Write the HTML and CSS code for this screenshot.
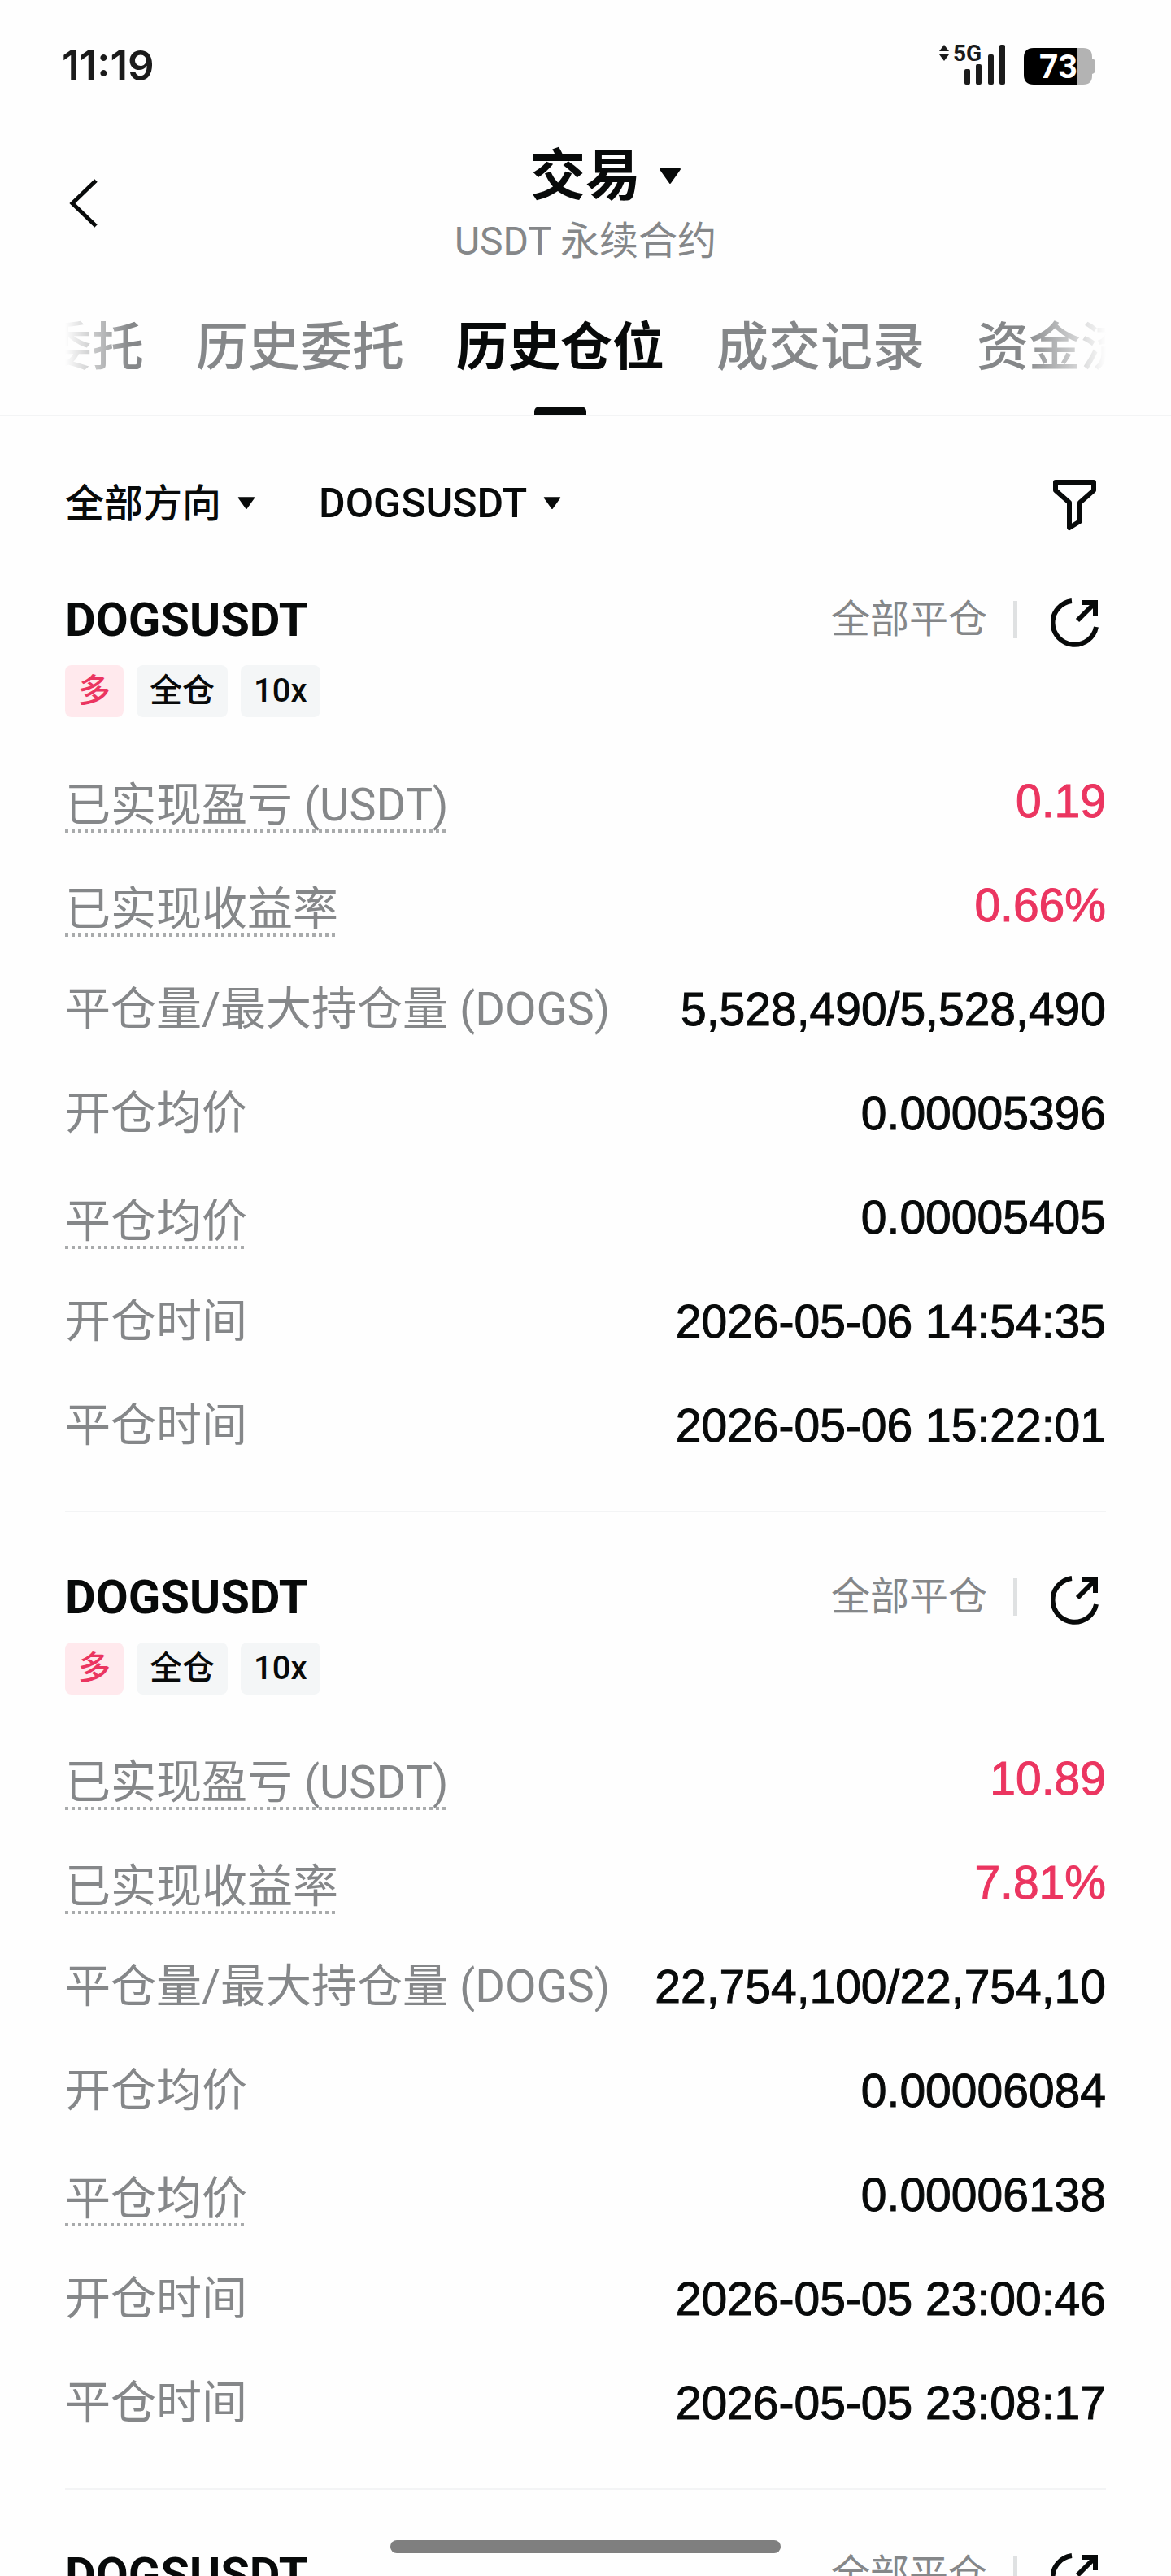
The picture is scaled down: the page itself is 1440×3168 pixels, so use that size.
FILE: index.html
```html
<!DOCTYPE html>
<html lang="zh-CN">
<head>
    <meta charset="UTF-8">
    <meta name="viewport" content="width=device-width, initial-scale=1.0">
    <title>历史仓位</title>
    <link rel="stylesheet" href="styles.css">
</head>
<body>
    <svg class="symbols" aria-hidden="true">
        <symbol id="caret" viewBox="0 0 28 20">
            <path d="M2 1h24L14 18z" fill="currentColor" stroke="currentColor" stroke-width="2" stroke-linejoin="round"/>
        </symbol>
        <symbol id="share" viewBox="0 0 60 72">
            <path d="M26 13A27 27 0 1 0 56 45" fill="none" stroke="currentColor" stroke-width="6"/>
            <path d="M33 37L54 16" fill="none" stroke="currentColor" stroke-width="6"/>
            <path d="M39 15H55V31" fill="none" stroke="currentColor" stroke-width="6"/>
        </symbol>
    </svg>

    <div class="status-bar">
        <span class="clock">11:19</span>
        <svg class="status-icons" viewBox="0 0 194 60" aria-label="5G 73%">
            <g fill="#1b1b1b">
                <path d="M1 13L7 5l6 8zM1 17h12l-6 8z"/>
                <text class="network" x="18" y="25">5G</text>
                <rect x="32" y="35" width="7" height="19" rx="2"/>
                <rect x="46" y="29" width="7" height="25" rx="2"/>
                <rect x="61" y="17" width="7" height="37" rx="2"/>
                <rect x="75" y="5" width="7" height="49" rx="2"/>
            </g>
            <path d="M170 9h8q11 0 11 11v2q4 1 4 5v9q0 4-4 5v2q0 11-11 11h-8z" fill="#b3b3b3"/>
            <path d="M117 9h54v45h-54q-12 0-12-12V21q0-12 12-12z" fill="#000"/>
            <text class="battery" x="124" y="46" fill="#fff">73</text>
        </svg>
    </div>

    <header class="page-header">
        <button class="back" aria-label="返回">
            <svg width="42" height="70" viewBox="0 0 42 70"><path d="M38 4L9 32l29 28" fill="none" stroke="currentColor" stroke-width="5"/></svg>
        </button>
        <div class="heading">
            <button class="title">交易<svg width="28" height="20"><use href="#caret"/></svg></button>
            <div class="subtitle">USDT 永续合约</div>
        </div>
    </header>

    <nav class="tabs">
        <div class="tab-list">
            <button class="tab">委托</button>
            <button class="tab">历史委托</button>
            <button class="tab active">历史仓位</button>
            <button class="tab">成交记录</button>
            <button class="tab">资金流水</button>
        </div>
    </nav>

    <div class="filters">
        <label class="filter">
            <select aria-label="方向"><option>全部方向</option></select>
            <svg width="22" height="16"><use href="#caret"/></svg>
        </label>
        <label class="filter pair">
            <select aria-label="合约"><option>DOGSUSDT</option></select>
            <svg width="22" height="16"><use href="#caret"/></svg>
        </label>
        <button class="filter-button" aria-label="筛选">
            <svg width="60" height="72" viewBox="0 0 60 72"><path d="M6 10h47v10L36 35v23l-13 8V35L6 20z" fill="none" stroke="currentColor" stroke-width="6" stroke-linejoin="round"/></svg>
        </button>
    </div>

    <main class="positions">
        <section class="card">
            <div class="card-head">
                <h2>DOGSUSDT</h2>
                <span class="state">全部平仓</span>
                <button class="share" aria-label="分享"><svg width="60" height="72"><use href="#share"/></svg></button>
            </div>
            <div class="tags">
                <span class="tag long">多</span>
                <span class="tag">全仓</span>
                <span class="tag">10x</span>
            </div>
            <dl class="rows">
                <div class="row"><dt class="hint">已实现盈亏 (USDT)</dt><dd class="profit">0.19</dd></div>
                <div class="row"><dt class="hint">已实现收益率</dt><dd class="profit">0.66%</dd></div>
                <div class="row"><dt>平仓量/最大持仓量 (DOGS)</dt><dd>5,528,490/5,528,490</dd></div>
                <div class="row"><dt>开仓均价</dt><dd>0.00005396</dd></div>
                <div class="row"><dt class="hint">平仓均价</dt><dd>0.00005405</dd></div>
                <div class="row"><dt>开仓时间</dt><dd>2026-05-06 14:54:35</dd></div>
                <div class="row"><dt>平仓时间</dt><dd>2026-05-06 15:22:01</dd></div>
            </dl>
        </section>

        <section class="card">
            <div class="card-head">
                <h2>DOGSUSDT</h2>
                <span class="state">全部平仓</span>
                <button class="share" aria-label="分享"><svg width="60" height="72"><use href="#share"/></svg></button>
            </div>
            <div class="tags">
                <span class="tag long">多</span>
                <span class="tag">全仓</span>
                <span class="tag">10x</span>
            </div>
            <dl class="rows">
                <div class="row"><dt class="hint">已实现盈亏 (USDT)</dt><dd class="profit">10.89</dd></div>
                <div class="row"><dt class="hint">已实现收益率</dt><dd class="profit">7.81%</dd></div>
                <div class="row"><dt>平仓量/最大持仓量 (DOGS)</dt><dd>22,754,100/22,754,10</dd></div>
                <div class="row"><dt>开仓均价</dt><dd>0.00006084</dd></div>
                <div class="row"><dt class="hint">平仓均价</dt><dd>0.00006138</dd></div>
                <div class="row"><dt>开仓时间</dt><dd>2026-05-05 23:00:46</dd></div>
                <div class="row"><dt>平仓时间</dt><dd>2026-05-05 23:08:17</dd></div>
            </dl>
        </section>

        <section class="card">
            <div class="card-head">
                <h2>DOGSUSDT</h2>
                <span class="state">全部平仓</span>
                <button class="share" aria-label="分享"><svg width="60" height="72"><use href="#share"/></svg></button>
            </div>
        </section>
    </main>

    <div class="home-indicator"></div>
</body>
</html>
```

FILE: styles.css
```css
* {
    box-sizing: border-box;
}
body {
    margin: 0;
    height: 100vh;
    overflow: hidden;
    display: flex;
    flex-direction: column;
    background-color: #fefefe;
    color: #080a0a;
    font-family: Roboto, "Noto Sans CJK SC", sans-serif;
    font-size: 48px;
}
button, select {
    padding: 0;
    border: none;
    background: none;
    color: inherit;
    font: inherit;
    cursor: pointer;
}
svg {
    display: block;
    flex-shrink: 0;
}
.symbols {
    position: absolute;
    width: 0;
    height: 0;
}

/* 状态栏 */
.status-bar {
    flex-shrink: 0;
    display: flex;
    justify-content: space-between;
    align-items: center;
    height: 160px;
    padding: 0 92px 0 76px;
}
.clock {
    color: #1b1b1b;
    font-family: Inter, sans-serif;
    font-size: 51px;
    font-weight: 600;
}
.status-icons {
    width: 194px;
    height: 60px;
}
.network {
    font-size: 28px;
    font-weight: 700;
}
.battery {
    font-size: 41px;
    font-weight: 700;
}

/* 标题 */
.page-header {
    flex-shrink: 0;
    display: grid;
    grid-template-columns: 1fr auto 1fr;
    align-items: center;
    padding: 13px 80px 0;
}
.back {
    justify-self: start;
}
.heading {
    text-align: center;
}
.title {
    display: flex;
    align-items: center;
    gap: 22px;
    margin: 0 auto;
    padding-left: 50px;
    font-size: 68px;
    font-weight: 700;
    line-height: 88px;
}
.subtitle {
    color: #858789;
    line-height: 72px;
}

/* 标签页 */
.tabs {
    flex-shrink: 0;
    padding: 50px 80px 0;
    border-bottom: 2px solid #f3f4f5;
}
.tab-list {
    display: flex;
    gap: 64px;
    overflow: hidden;
    -webkit-mask-image: linear-gradient(to right, transparent, #000 80px, #000 calc(100% - 100px), transparent);
    mask-image: linear-gradient(to right, transparent, #000 80px, #000 calc(100% - 100px), transparent);
}
.tab {
    position: relative;
    flex-shrink: 0;
    height: 127px;
    padding-bottom: 37px;
    color: #858789;
    font-size: 64px;
    font-weight: 500;
    line-height: 90px;
}
.tab:first-child {
    margin-left: -31px;
}
.tab.active {
    color: #080a0a;
    font-weight: 700;
}
.tab.active::after {
    content: "";
    position: absolute;
    left: calc(50% - 32px);
    bottom: 0;
    width: 64px;
    height: 10px;
    border-radius: 6px 6px 0 0;
    background-color: #080a0a;
}

/* 筛选 */
.filters {
    flex-shrink: 0;
    display: flex;
    align-items: center;
    gap: 78px;
    padding: 71px 80px 3px;
}
.filter {
    display: flex;
    align-items: center;
    gap: 19px;
}
.filter select {
    appearance: none;
    height: 72px;
    font-weight: 500;
}
.pair select {
    font-size: 50px;
}
.filter-button {
    margin-left: auto;
    margin-right: 8px;
}

/* 仓位列表 */
.positions {
    flex: 1;
    min-height: 0;
    overflow: hidden;
    padding: 0 80px;
}
.card {
    padding: 72px 0 41px;
    border-bottom: 2px solid #f3f4f5;
}
.card-head {
    display: flex;
    align-items: center;
    height: 64px;
}
.card-head h2 {
    flex: 1;
    margin: 0;
    font-size: 58px;
    font-weight: 700;
}
.state {
    color: #858789;
    line-height: 64px;
}
.share {
    margin-left: 32px;
    padding: 0 8px 0 46px;
    background: linear-gradient(#dfe1e2, #dfe1e2) left center / 5px 46px no-repeat;
}
.tags {
    display: flex;
    gap: 16px;
    margin: 24px 0 39px;
}
.tag {
    padding: 0 16px;
    border-radius: 8px;
    background-color: #f4f6f7;
    font-size: 40px;
    font-weight: 500;
    line-height: 64px;
}
.tag.long {
    background-color: #ffe9ed;
    color: #eb3560;
}
.rows {
    margin: 0;
}
.row {
    display: flex;
    justify-content: space-between;
    align-items: center;
    height: 128px;
}
.row dt {
    color: #858789;
    font-size: 56px;
    line-height: 64px;
}
.row dt.hint {
    padding: 12px 0 2px;
    background: repeating-linear-gradient(to right, #a9abac 0 4px, transparent 4px 8px) left bottom / 100% 4px no-repeat;
}
.row dd {
    margin: 0;
    font-family: "Liberation Sans", sans-serif;
    font-size: 57px;
    line-height: 64px;
    -webkit-text-stroke: 1px currentColor;
}
.row dd.profit {
    color: #eb3560;
}

.home-indicator {
    position: fixed;
    left: calc(50% - 240px);
    bottom: 28px;
    width: 480px;
    height: 16px;
    border-radius: 8px;
    background-color: #7f7f7f;
}
```
